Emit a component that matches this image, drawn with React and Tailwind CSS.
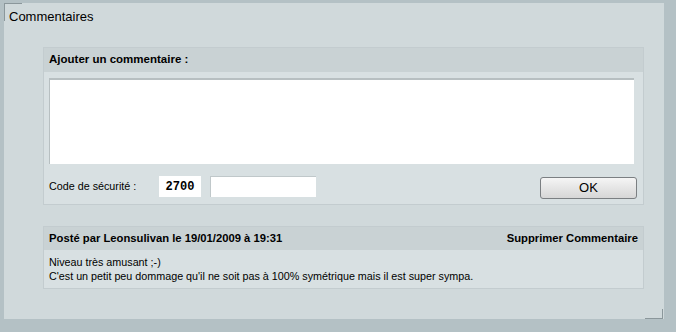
import React from "react";

function App() {
  return (
    <div className="w-[676px] h-[332px] bg-[#b4c1c5] pt-[3px] pl-[4px] font-['Liberation_Sans',Arial,sans-serif] text-[10.75px] text-black">
      <div className="relative w-[660px] h-[316px] bg-[#d0d9db]">
        {/* corner marks */}
        <div className="absolute left-0 top-0 w-[18px] h-[18px] border-l border-t border-[#8b979b]"></div>
        <div className="absolute right-[1px] bottom-0 w-[18px] h-[10px] border-r border-b border-[#8b979b]"></div>

        <div className="pl-[5px] pt-[6px] text-[13px] leading-[16px]">Commentaires</div>

        <div className="ml-[39px] mt-[22px] w-[601px] border border-[#c3cccf] bg-[#d8e0e2]">
          <div className="h-[24px] bg-[#c9d2d4] flex items-center px-[5px] font-bold text-[11.5px]">
            Ajouter un commentaire :
          </div>
          <div className="px-[5px] pt-[6px]">
            <div className="w-[585px] h-[86px] bg-white border-t-2 border-l border-[#b7bfc1]"></div>
          </div>
          <div className="flex items-start px-[5px] pt-[12px] pb-[5px]">
            <div className="w-[110px] pt-[2px]">Code de sécurité :</div>
            <div className="w-[42px] h-[21px] bg-white flex items-center justify-center font-['Liberation_Mono',monospace] font-bold text-[12px]">
              2700
            </div>
            <div className="ml-[9px] w-[106px] h-[21px] bg-white border-t border-l border-[#c0c8ca]"></div>
            <button className="ml-auto mr-[1px] mt-[1px] w-[97px] h-[22px] rounded-[3px] border border-[#7b7f82] bg-gradient-to-b from-[#f5f5f5] to-[#d6d6d6] text-[13px] text-black">
              OK
            </button>
          </div>
        </div>

        <div className="ml-[39px] mt-[21px] w-[601px] border border-[#c3cccf] bg-[#d8e0e2]">
          <div className="h-[23px] bg-[#c9d2d4] flex items-center justify-between px-[5px] font-bold text-[11.25px]">
            <span>Posté par Leonsulivan le 19/01/2009 à 19:31</span>
            <span>Supprimer Commentaire</span>
          </div>
          <div className="px-[5px] pt-[6px] pb-[6px] leading-[12px]">
            <div>Niveau très amusant ;-)</div>
            <div className="mt-[2px]">C'est un petit peu dommage qu'il ne soit pas à 100% symétrique mais il est super sympa.</div>
          </div>
        </div>
      </div>
    </div>
  );
}

export default App;
